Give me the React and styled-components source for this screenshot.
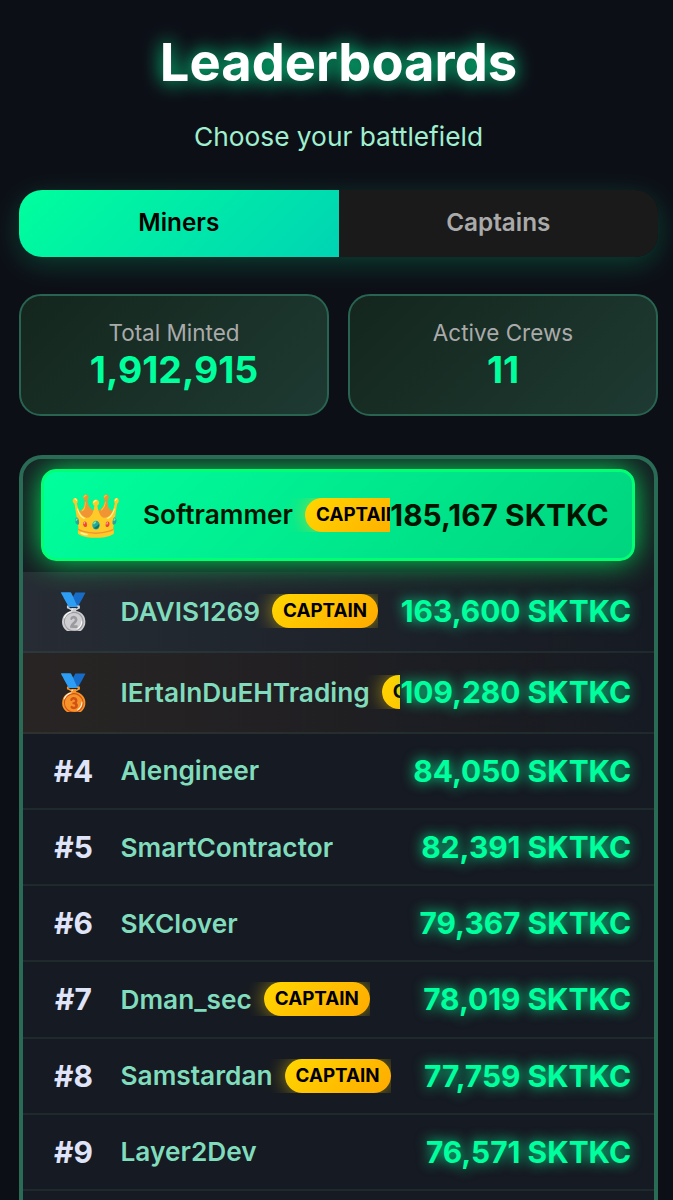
import React from "react";
import styled, { createGlobalStyle } from "styled-components";

const stats = [
  { label: "Total Minted", value: "1,912,915" },
  { label: "Active Crews", value: "11" },
];

const miners = [
  { name: "Softrammer", amount: "185,167", captain: true },
  { name: "DAVIS1269", amount: "163,600", captain: true },
  { name: "IErtaInDuEHTrading", amount: "109,280", captain: true },
  { name: "AIengineer", amount: "84,050" },
  { name: "SmartContractor", amount: "82,391" },
  { name: "SKClover", amount: "79,367" },
  { name: "Dman_sec", amount: "78,019", captain: true },
  { name: "Samstardan", amount: "77,759", captain: true },
  { name: "Layer2Dev", amount: "76,571" },
  { name: "", amount: "" },
];

const medals = ["👑", "🥈", "🥉"];

export default function App() {
  return (
    <>
      <GlobalStyle />
      <Page>
        <Title>Leaderboards</Title>
        <Subtitle>Choose your battlefield</Subtitle>

        <Tabs>
          <Tab $active>Miners</Tab>
          <Tab>Captains</Tab>
        </Tabs>

        <Stats>
          {stats.map((s) => (
            <StatCard key={s.label}>
              <StatLabel>{s.label}</StatLabel>
              <StatValue>{s.value}</StatValue>
            </StatCard>
          ))}
        </Stats>

        <Board>
          {miners.map((m, i) => (
            <Row key={i} $place={i + 1}>
              {i < 3 ? (
                <Medal $first={i === 0}>{medals[i]}</Medal>
              ) : (
                <Rank>{m.name && `#${i + 1}`}</Rank>
              )}
              <Player>
                <Name $first={i === 0}>{m.name}</Name>
                {m.captain && <Badge>CAPTAIN</Badge>}
              </Player>
              <Amount $first={i === 0}>{m.amount && `${m.amount} SKTKC`}</Amount>
            </Row>
          ))}
        </Board>
      </Page>
    </>
  );
}

const GlobalStyle = createGlobalStyle`
  * {
    box-sizing: border-box;
  }

  body {
    margin: 0;
    background: #0d0f17;
    font-family: Inter, sans-serif;
    overflow: hidden;
  }
`;

const Page = styled.div`
  height: 1200px;
  overflow: hidden;
  padding: 30px 15px 0 19px;
  background: #0d0f17;
`;

const Title = styled.h1`
  margin: 0;
  font-size: 52.5px;
  line-height: 64px;
  font-weight: 700;
  text-align: center;
  color: #fff;
  text-shadow: 0 0 19px #00ff9d;
`;

const Subtitle = styled.p`
  margin: 26px 0 37px;
  font-size: 26.3px;
  line-height: 33px;
  text-align: center;
  color: #a0f0d0;
`;

const Tabs = styled.div`
  display: flex;
  height: 67px;
  border-radius: 23px;
  overflow: hidden;
  box-shadow: 0 7px 28px rgba(0, 255, 157, 0.2);
`;

const Tab = styled.button`
  flex: 1;
  border: 0;
  padding: 0 0 3px;
  font: 600 24.3px Inter, sans-serif;
  color: ${(p) => (p.$active ? "#000" : "#aaa")};
  background: ${(p) =>
    p.$active ? "linear-gradient(135deg, #00ff9d, #00d4b4)" : "#1a1a1a"};
`;

const Stats = styled.div`
  display: grid;
  grid-template-columns: 1fr 1fr;
  gap: 19px;
  margin: 37px 0 38.5px;
`;

const StatCard = styled.div`
  height: 122px;
  padding-top: 22px;
  text-align: center;
  border: 2px solid #286450;
  border-radius: 22px;
  background: linear-gradient(135deg, #14261d, #1e3a32);
`;

const StatLabel = styled.div`
  font-size: 22.5px;
  line-height: 29px;
  color: #aaa;
`;

const StatValue = styled.div`
  font-size: 37.4px;
  line-height: 45px;
  font-weight: 700;
  color: #00ff9d;
`;

const Board = styled.div`
  height: 900px;
  border: 4px solid #296b55;
  border-radius: 23px;
  overflow: hidden;
  background: #161a22;
`;

const rowBackground = {
  1: "linear-gradient(135deg, #00ff9d, #00d47e)",
  2: "linear-gradient(90deg, rgba(170, 192, 200, 0.11), transparent)",
  3: "linear-gradient(90deg, rgba(205, 127, 50, 0.1), transparent)",
};

const Row = styled.div`
  display: flex;
  align-items: center;
  height: ${(p) => (p.$place <= 3 ? 80.9 : 76.2)}px;
  padding: 0 23px 0 22.5px;
  border-bottom: 2px solid rgba(60, 90, 80, 0.25);
  background: ${(p) => rowBackground[p.$place] || "transparent"};

  ${(p) =>
    p.$place === 1 &&
    `
    height: 92px;
    margin: 10.5px 19px 11px 18px;
    padding: 0 23.5px 1px 24px;
    border: 3px solid #00ff73;
    border-radius: 15px;
    box-shadow: 0 0 30px rgba(0, 255, 100, 0.85);
  `}
`;

const Rank = styled.div`
  width: 56px;
  flex-shrink: 0;
  margin-right: 19px;
  text-align: center;
  font-size: 29.9px;
  font-weight: 700;
  color: #e0e4f8;
`;

const Medal = styled(Rank)`
  display: flex;
  justify-content: center;
  font-size: ${(p) => (p.$first ? 41.5 : 36.5)}px;
  line-height: ${(p) => (p.$first ? 40 : 42)}px;
  height: 40px;
  overflow: ${(p) => (p.$first ? "visible" : "hidden")};
`;

const Player = styled.div`
  display: flex;
  align-items: center;
  min-width: 0;
  overflow: hidden;
  white-space: nowrap;
`;

const Name = styled.span`
  padding-top: 1px;
  font-size: 26.25px;
  line-height: 32px;
  font-weight: 600;
  color: ${(p) => (p.$first ? "#001400" : "#80dcbc")};
`;

const Badge = styled.span`
  flex-shrink: 0;
  height: 34px;
  margin-left: 12px;
  padding: 0 11px;
  border-radius: 17px;
  font-size: 18.8px;
  line-height: 34px;
  font-weight: 700;
  color: #000;
  background: linear-gradient(135deg, #ffd700, #ffaa00);
  box-shadow: 0 0 19px rgba(255, 215, 0, 0.6);
`;

const Amount = styled.div`
  flex-shrink: 0;
  margin-left: auto;
  white-space: nowrap;
  font-size: 29.9px;
  font-weight: 700;
  color: ${(p) => (p.$first ? "#001400" : "#00ff9d")};
  text-shadow: ${(p) => (p.$first ? "none" : "0 0 13px #00ff9d")};
`;
